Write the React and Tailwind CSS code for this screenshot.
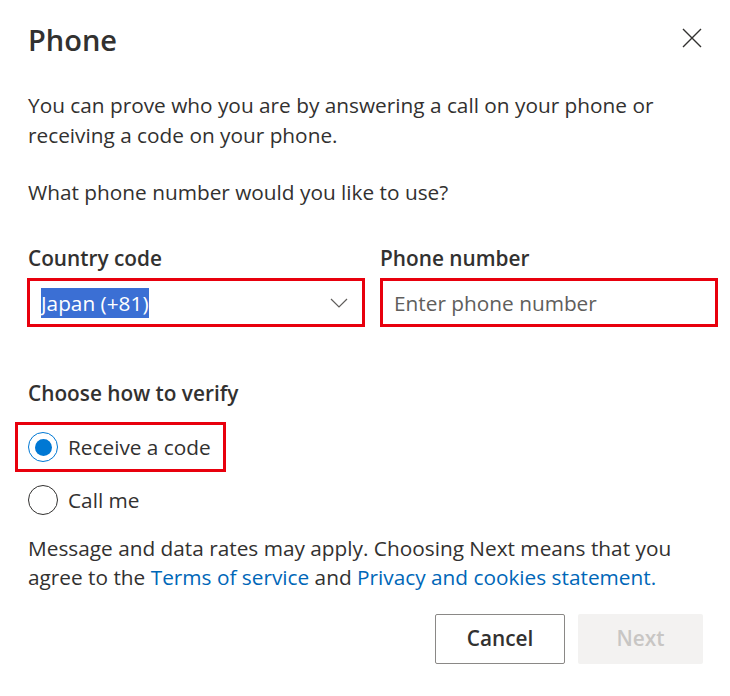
import React from 'react';

const font = { fontFamily: '"Open Sans", "Noto Sans", sans-serif' };

const Radio = ({ checked, label }) => (
    <div className="flex items-center gap-[10px]">
        <span
            className={`w-[30px] h-[30px] rounded-full border flex items-center justify-center ${checked ? 'border-[#0078d4]' : 'border-[#323130]'}`}
        >
            {checked && <span className="w-[17px] h-[17px] rounded-full bg-[#0078d4]" />}
        </span>
        <span className="text-[20.8px] leading-[30px] text-[#323130]">{label}</span>
    </div>
);

export default function App() {
    return (
        <div className="w-[730px] h-[696px] bg-white text-[#323130]" style={font}>
            <div className="pl-[28px] pr-[12px] pt-[22px]">
                <div className="flex items-start justify-between">
                    <h1 className="text-[29px] leading-[36px] font-semibold">Phone</h1>
                    <button className="mt-[6px] mr-[16px] w-[20px] h-[20px] text-[#323130]">
                        <svg viewBox="0 0 20 20" width="20" height="20" fill="none" stroke="currentColor" strokeWidth="1.4">
                            <path d="M1 1 L19 19 M19 1 L1 19" />
                        </svg>
                    </button>
                </div>

                <p className="mt-[32px] text-[20.8px] leading-[30px] pr-[30px]">
                    You can prove who you are by answering a call on your phone or receiving a code on your phone.
                </p>
                <p className="mt-[27px] text-[20.8px] leading-[30px]">What phone number would you like to use?</p>

                <div className="mt-[36px] grid grid-cols-2 gap-[15px] -ml-[1px]">
                    <div>
                        <div className="text-[20.8px] leading-[30px] font-semibold pl-[1px]">Country code</div>
                        <div className="mt-[5px] h-[49px] border-[3px] border-[#e8000d] flex items-center justify-between pl-[11px] pr-[14px]">
                            <span className="bg-[#3b6fd4] text-white text-[20.8px] leading-[30px]">Japan (+81)</span>
                            <svg viewBox="0 0 18 10" width="18" height="10" fill="none" stroke="#605e5c" strokeWidth="1.2">
                                <path d="M1 1 L9 9 L17 1" />
                            </svg>
                        </div>
                    </div>
                    <div>
                        <div className="text-[20.8px] leading-[30px] font-semibold">Phone number</div>
                        <div className="mt-[5px] h-[49px] border-[3px] border-[#e8000d] flex items-center pl-[11px]">
                            <span className="text-[20.8px] leading-[30px] text-[#605e5c]">Enter phone number</span>
                        </div>
                    </div>
                </div>

                <div className="mt-[51px] text-[20.8px] leading-[30px] font-semibold">Choose how to verify</div>
                <div className="mt-[14px] -ml-[13px] w-[211px] h-[50px] border-[3px] border-[#e8000d] flex items-center pl-[10px]">
                    <Radio checked label="Receive a code" />
                </div>
                <div className="mt-[13px]">
                    <Radio label="Call me" />
                </div>

                <p className="mt-[19px] text-[20.8px] leading-[29px] pr-[30px]">
                    Message and data rates may apply. Choosing Next means that you agree to the{' '}
                    <a className="text-[#0067b8]">Terms of service</a> and{' '}
                    <a className="text-[#0067b8]">Privacy and cookies statement.</a>
                </p>

                <div className="mt-[22px] flex justify-end gap-[13px] mr-[15px]">
                    <button className="w-[130px] h-[50px] border border-[#8a8886] rounded-[2px] text-[20.8px] font-semibold text-[#323130]">
                        Cancel
                    </button>
                    <button className="w-[125px] h-[50px] bg-[#f3f2f1] rounded-[2px] text-[20.8px] font-semibold text-[#c8c6c4]">
                        Next
                    </button>
                </div>
            </div>
        </div>
    );
}
